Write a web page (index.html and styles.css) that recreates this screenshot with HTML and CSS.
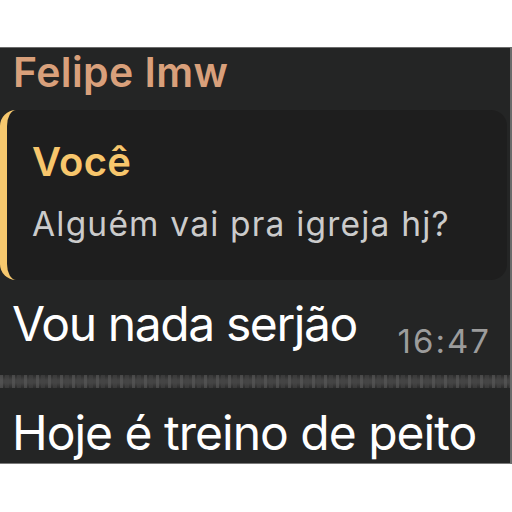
FILE: index.html
```html
<!DOCTYPE html>
<html lang="pt">
<head>
    <meta charset="UTF-8">
    <meta name="viewport" content="width=device-width, initial-scale=1.0">
    <title>Mensagem</title>
    <link rel="stylesheet" href="styles.css">
</head>
<body>
    <div class="chat">
        <div class="sender">Felipe Imw</div>
        <div class="reply">
            <div class="reply-author">Você</div>
            <div class="reply-text">Alguém vai pra igreja hj?</div>
        </div>
        <div class="message">
            <span class="message-text">Vou nada serjão</span>
            <span class="message-time">16:47</span>
        </div>
        <div class="divider"></div>
        <div class="message next">
            <span class="message-text">Hoje é treino de peito</span>
        </div>
    </div>
</body>
</html>
```

FILE: styles.css
```css
body {
    margin: 0;
    padding: 0;
    background-color: #fff;
    font-family: Inter, "Liberation Sans", Arial, sans-serif;
}
.chat {
    box-sizing: border-box;
    margin-top: 47px;
    width: 512px;
    height: 417px;
    overflow: hidden;
    background-color: #242525;
    border-top: 1px solid #6b6b6b;
    border-right: 2px solid #6b6b6b;
    border-bottom: 1px solid #7a7a7a;
    display: flex;
    flex-direction: column;
}
.chat > * {
    flex-shrink: 0;
    white-space: nowrap;
}
.sender {
    padding-left: 13px;
    font-size: 41px;
    line-height: 48px;
    font-weight: 600;
    letter-spacing: 0.4px;
    color: #d9a07b;
}
.reply {
    margin: 14px 3px 0 0;
    padding: 29px 0 34px 25px;
    border-left: 7px solid #f6c86e;
    border-radius: 16px;
    background-color: #1e1e1e;
    display: flex;
    flex-direction: column;
    gap: 17px;
}
.reply-author {
    font-size: 40px;
    line-height: 46px;
    font-weight: 600;
    letter-spacing: 0.3px;
    color: #f7c66c;
}
.reply-text {
    font-size: 33.5px;
    line-height: 44px;
    letter-spacing: 1.2px;
    color: #cbcbcb;
}
.message {
    margin-top: 16px;
    padding: 0 19px 0 12px;
    display: flex;
    justify-content: space-between;
    align-items: flex-start;
}
.message-text {
    font-size: 48px;
    line-height: 56px;
    letter-spacing: -1.4px;
    color: #fff;
}
.message-time {
    margin-top: 25px;
    font-size: 33px;
    line-height: 40px;
    letter-spacing: 2px;
    color: #9c9c9c;
}
.divider {
    margin-top: 14px;
    height: 13px;
    background-color: #3a3a3a;
    background-image:
        repeating-linear-gradient(90deg, rgba(90, 90, 90, 0.6) 0 3px, transparent 3px 5px, rgba(70, 70, 70, 0.5) 5px 9px, transparent 9px 12px),
        linear-gradient(180deg, #2c2c2c 0, #444 40%, #444 60%, #2c2c2c 100%);
}
.message.next {
    margin-top: 17px;
}
.message.next .message-text {
    letter-spacing: -1px;
}
```
